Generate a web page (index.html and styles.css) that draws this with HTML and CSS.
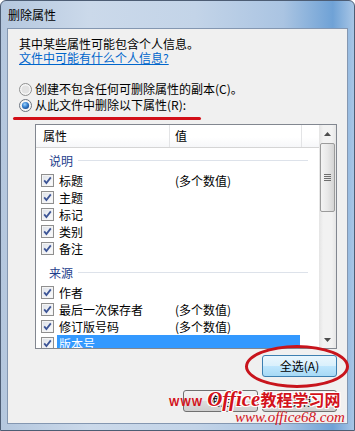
FILE: index.html
```html
<!DOCTYPE html>
<html lang="zh-CN">
<head>
    <meta charset="UTF-8">
    <title>删除属性</title>
    <link rel="stylesheet" href="styles.css">
</head>
<body>
<div class="window">
    <svg class="defs" width="0" height="0">
        <defs>
            <radialGradient id="dot" cx="40%" cy="35%" r="70%">
                <stop offset="0" stop-color="#9fd3fb"/>
                <stop offset="0.5" stop-color="#3c86d4"/>
                <stop offset="1" stop-color="#174a8f"/>
            </radialGradient>
            <linearGradient id="box" x1="0" y1="0" x2="1" y2="1">
                <stop offset="0" stop-color="#dfe3ea"/>
                <stop offset="1" stop-color="#fbfbfc"/>
            </linearGradient>
        </defs>
    </svg>
    <div class="titlebar">删除属性</div>
    <div class="client">
        <p class="intro">其中某些属性可能包含个人信息。<br><a href="#" class="link">文件中可能有什么个人信息?</a></p>

        <div class="options">
            <div class="option">
                <svg width="13" height="13" viewBox="0 0 13 13"><circle cx="6.5" cy="6.5" r="6" fill="#f6f6f6" stroke="#8e8f8f"/><circle cx="6.5" cy="6.5" r="4" fill="#e2e2e2"/></svg>
                <span>创建不包含任何可删除属性的副本(C)。</span>
            </div>
            <div class="option">
                <svg width="13" height="13" viewBox="0 0 13 13"><circle cx="6.5" cy="6.5" r="6" fill="#f6f6f6" stroke="#6d7580"/><circle cx="6.5" cy="6.5" r="3.6" fill="url(#dot)"/></svg>
                <span>从此文件中删除以下属性(R):</span>
            </div>
        </div>
        <div class="mark-line"></div>

        <div class="list">
            <div class="list-main">
                <div class="list-head">
                    <span class="head-name">属性</span>
                    <span class="head-value">值</span>
                </div>

                <div class="group"><span>说明</span><i></i></div>
                <div class="rows">
                    <div class="row"><svg class="check" viewBox="0 0 13 13"><rect x="0.5" y="0.5" width="12" height="12" fill="#f4f4f4" stroke="#8f8f8f"/><rect x="2" y="2" width="9" height="9" fill="url(#box)"/><path d="M3.2 6.4 L5.4 9 L9.8 3.4" fill="none" stroke="#3d5596" stroke-width="1.8"/></svg><span class="name">标题</span><span class="value">(多个数值)</span></div>
                    <div class="row"><svg class="check" viewBox="0 0 13 13"><rect x="0.5" y="0.5" width="12" height="12" fill="#f4f4f4" stroke="#8f8f8f"/><rect x="2" y="2" width="9" height="9" fill="url(#box)"/><path d="M3.2 6.4 L5.4 9 L9.8 3.4" fill="none" stroke="#3d5596" stroke-width="1.8"/></svg><span class="name">主题</span><span class="value"></span></div>
                    <div class="row"><svg class="check" viewBox="0 0 13 13"><rect x="0.5" y="0.5" width="12" height="12" fill="#f4f4f4" stroke="#8f8f8f"/><rect x="2" y="2" width="9" height="9" fill="url(#box)"/><path d="M3.2 6.4 L5.4 9 L9.8 3.4" fill="none" stroke="#3d5596" stroke-width="1.8"/></svg><span class="name">标记</span><span class="value"></span></div>
                    <div class="row"><svg class="check" viewBox="0 0 13 13"><rect x="0.5" y="0.5" width="12" height="12" fill="#f4f4f4" stroke="#8f8f8f"/><rect x="2" y="2" width="9" height="9" fill="url(#box)"/><path d="M3.2 6.4 L5.4 9 L9.8 3.4" fill="none" stroke="#3d5596" stroke-width="1.8"/></svg><span class="name">类别</span><span class="value"></span></div>
                    <div class="row"><svg class="check" viewBox="0 0 13 13"><rect x="0.5" y="0.5" width="12" height="12" fill="#f4f4f4" stroke="#8f8f8f"/><rect x="2" y="2" width="9" height="9" fill="url(#box)"/><path d="M3.2 6.4 L5.4 9 L9.8 3.4" fill="none" stroke="#3d5596" stroke-width="1.8"/></svg><span class="name">备注</span><span class="value"></span></div>
                </div>

                <div class="group"><span>来源</span><i></i></div>
                <div class="rows">
                    <div class="row"><svg class="check" viewBox="0 0 13 13"><rect x="0.5" y="0.5" width="12" height="12" fill="#f4f4f4" stroke="#8f8f8f"/><rect x="2" y="2" width="9" height="9" fill="url(#box)"/><path d="M3.2 6.4 L5.4 9 L9.8 3.4" fill="none" stroke="#3d5596" stroke-width="1.8"/></svg><span class="name">作者</span><span class="value"></span></div>
                    <div class="row"><svg class="check" viewBox="0 0 13 13"><rect x="0.5" y="0.5" width="12" height="12" fill="#f4f4f4" stroke="#8f8f8f"/><rect x="2" y="2" width="9" height="9" fill="url(#box)"/><path d="M3.2 6.4 L5.4 9 L9.8 3.4" fill="none" stroke="#3d5596" stroke-width="1.8"/></svg><span class="name">最后一次保存者</span><span class="value">(多个数值)</span></div>
                    <div class="row"><svg class="check" viewBox="0 0 13 13"><rect x="0.5" y="0.5" width="12" height="12" fill="#f4f4f4" stroke="#8f8f8f"/><rect x="2" y="2" width="9" height="9" fill="url(#box)"/><path d="M3.2 6.4 L5.4 9 L9.8 3.4" fill="none" stroke="#3d5596" stroke-width="1.8"/></svg><span class="name">修订版号码</span><span class="value">(多个数值)</span></div>
                    <div class="row selected"><svg class="check" viewBox="0 0 13 13"><rect x="0.5" y="0.5" width="12" height="12" fill="#f4f4f4" stroke="#8f8f8f"/><rect x="2" y="2" width="9" height="9" fill="url(#box)"/><path d="M3.2 6.4 L5.4 9 L9.8 3.4" fill="none" stroke="#3d5596" stroke-width="1.8"/></svg><span class="name">版本号</span><span class="value"></span></div>
                </div>
            </div>

            <div class="scrollbar">
                <div class="sb-btn"><svg width="7" height="4" viewBox="0 0 7 4"><path d="M0 4 L3.5 0 L7 4 Z" fill="#4d4d4d"/></svg></div>
                <div class="sb-thumb">
                    <svg width="7" height="7" viewBox="0 0 7 7"><path d="M0 0.5 H7 M0 2.5 H7 M0 4.5 H7 M0 6.5 H7" stroke="#6e6e6e" stroke-width="1"/></svg>
                </div>
                <div class="sb-track"></div>
                <div class="sb-btn"><svg width="7" height="4" viewBox="0 0 7 4"><path d="M0 0 L3.5 4 L7 0 Z" fill="#4d4d4d"/></svg></div>
            </div>
        </div>

        <div class="select-row">
            <button class="btn btn-default">全选(A)</button>
        </div>

        <div class="footer">
            <button class="btn">确定</button>
            <button class="btn">取消</button>
        </div>
    </div>

    <div class="ring"></div>

    <div class="watermark">
        <div class="wm-top"><span class="wm-www">WWW</span><span class="wm-office">Office</span><span class="wm-cn">教程学习网</span></div>
        <div class="wm-url">www.office68.com</div>
    </div>
</div>
</body>
</html>
```

FILE: styles.css
```css
body {
    margin: 0;
    padding: 0;
    font-family: "Noto Sans CJK SC", "Liberation Sans", sans-serif;
    font-size: 12px;
    color: #000;
}

.defs {
    position: absolute;
}

.window {
    position: relative;
    width: 355px;
    height: 431px;
    box-sizing: border-box;
    display: flex;
    flex-direction: column;
    padding: 0 6px 6px 6px;
    border: 1px solid #4d5d74;
    border-radius: 6px 6px 0 0;
    overflow: hidden;
    background: linear-gradient(90deg, #b4c7de 0%, #cbd9ea 25%, #c3d4e8 55%, #aac4e2 80%, #6fa2d6 94%, #a8c6e6 100%);
}

.titlebar {
    height: 27px;
    line-height: 27px;
    padding-left: 1px;
    font-size: 12px;
}

.client {
    flex: 1;
    display: flex;
    flex-direction: column;
    padding: 8px 10px 0 11px;
    background: #f0f0f0;
    border: 1px solid #8497b1;
}

.intro {
    margin: 0;
    line-height: 14px;
}

.link {
    color: #0066cc;
    text-decoration: underline;
}

.options {
    margin-top: 16px;
}

.option {
    display: flex;
    align-items: center;
    gap: 3px;
    height: 16px;
    line-height: 16px;
}

.mark-line {
    margin: 4px 0 0 -6px;
    width: 188px;
    height: 3px;
    border-radius: 2px;
    background: #d20f18;
}

.list {
    display: flex;
    height: 225px;
    box-sizing: border-box;
    margin: 4px 0 0 16px;
    border: 1px solid #828790;
    background: #fff;
}

.list-main {
    flex: 1;
    overflow: hidden;
}

.list-head {
    display: flex;
    height: 23px;
    box-sizing: border-box;
    line-height: 22px;
    border-bottom: 1px solid #d5d5d5;
    background: linear-gradient(#ffffff, #ffffff 55%, #f6f7f9);
}

.head-name {
    width: 134px;
    box-sizing: border-box;
    padding-left: 7px;
    border-right: 1px solid #e3e4e6;
}

.head-value {
    width: 132px;
    box-sizing: border-box;
    padding-left: 5px;
    border-right: 1px solid #e3e4e6;
}

.group {
    display: flex;
    align-items: center;
    height: 24px;
    padding-left: 13px;
    color: #1e3e8c;
}

.group i {
    flex: 1;
    height: 1px;
    margin: 1px 11px 0 5px;
    background: #dde2ea;
}

.rows + .group {
    margin-top: 3px;
}

.row {
    display: flex;
    align-items: center;
    height: 17px;
    line-height: 17px;
}

.check {
    width: 13px;
    height: 13px;
    margin: 0 3px 0 5px;
    flex: none;
}

.name {
    width: 113px;
    height: 17px;
    box-sizing: border-box;
    padding-left: 2px;
    white-space: nowrap;
}

.value {
    width: 130px;
    height: 17px;
    box-sizing: border-box;
    padding-left: 5px;
    white-space: nowrap;
}

.row.selected .name,
.row.selected .value {
    background: #3399ff;
    color: #fff;
}

.scrollbar {
    width: 17px;
    display: flex;
    flex-direction: column;
    background: linear-gradient(90deg, #e4e4e4, #f2f2f2 25%, #f2f2f2 75%, #e6e6e6);
}

.sb-btn {
    height: 17px;
    display: flex;
    align-items: center;
    justify-content: center;
}

.sb-thumb {
    height: 69px;
    box-sizing: border-box;
    margin: 1px 1px 0 1px;
    border: 1px solid #9b9b9b;
    border-radius: 2px;
    display: flex;
    align-items: center;
    justify-content: center;
    background: linear-gradient(90deg, #f4f4f4, #e8e8e8 50%, #d4d4d4);
}

.sb-track {
    flex: 1;
}

.select-row {
    display: flex;
    justify-content: flex-end;
    margin-top: 6px;
}

.footer {
    display: flex;
    justify-content: flex-end;
    gap: 4px;
    margin-top: 13px;
}

.btn {
    width: 75px;
    height: 22px;
    padding: 0;
    font-family: inherit;
    font-size: 12px;
    line-height: 20px;
    color: #000;
    border: 1px solid #707070;
    border-radius: 3px;
    background: linear-gradient(#f2f2f2 0%, #ebebeb 50%, #dddddd 51%, #cfcfcf 100%);
}

.btn-default {
    border-color: #3c7fb1;
    background: linear-gradient(#eaf6fd 0%, #d9f0fc 50%, #bee6fd 51%, #a7d9f5 100%);
}

/* annotation drawn over the dialog */
.ring {
    position: absolute;
    left: 244px;
    top: 344px;
    width: 104px;
    height: 43px;
    box-sizing: border-box;
    border: 3px solid #c8141c;
    border-radius: 50%;
}

.watermark {
    position: absolute;
    left: 168px;
    top: 386px;
    color: #d3121b;
}

.wm-top {
    display: flex;
    align-items: baseline;
    height: 22px;
}

.wm-www {
    font-family: "Liberation Sans", sans-serif;
    font-weight: bold;
    font-size: 11px;
    letter-spacing: 1px;
    margin-right: 4px;
}

.wm-office {
    font-family: "Liberation Serif", serif;
    font-style: italic;
    font-weight: bold;
    font-size: 21px;
    text-shadow: 1px 1px 0 #fff, -1px -1px 0 #fff, 1px -1px 0 #fff, -1px 1px 0 #fff;
}

.wm-cn {
    font-weight: bold;
    font-size: 16px;
    text-shadow: 1px 1px 0 #fff, -1px -1px 0 #fff, 1px -1px 0 #fff, -1px 1px 0 #fff;
}

.wm-url {
    margin-left: 66px;
    font-family: "Liberation Serif", serif;
    font-style: italic;
    font-size: 15px;
    line-height: 16px;
}
```
